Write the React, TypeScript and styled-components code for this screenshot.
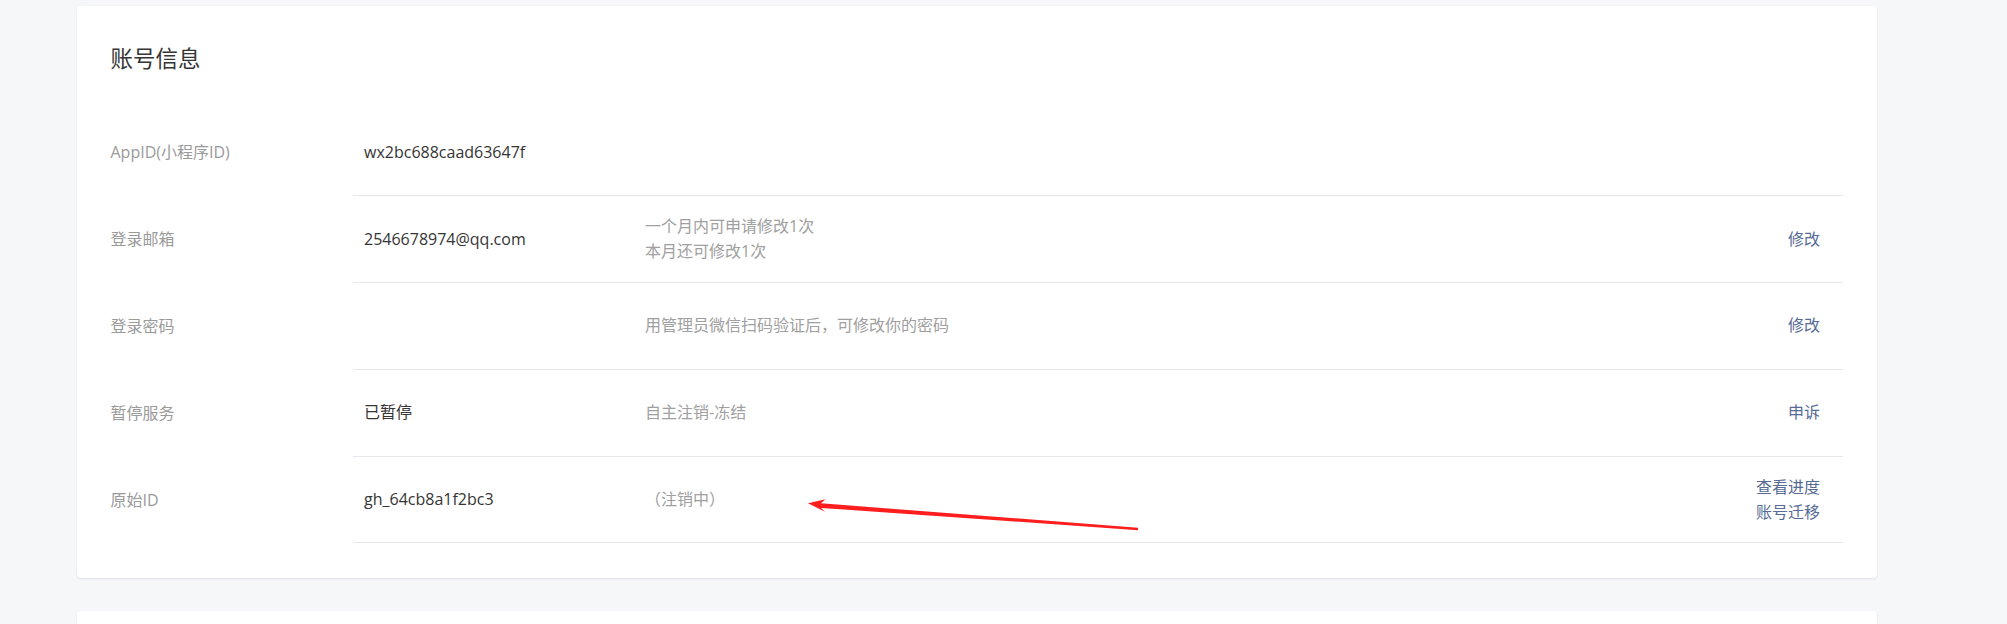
import React from "react";
import styled, { createGlobalStyle } from "styled-components";

const GlobalStyle = createGlobalStyle`
  html, body {
    margin: 0;
    padding: 0;
    background: #f6f7f9;
  }
  body {
    font-family: "Open Sans", "Noto Sans CJK SC", sans-serif;
    font-size: 16px;
    color: #353535;
    -webkit-font-smoothing: antialiased;
  }
`;

const Page = styled.div`
  position: relative;
  box-sizing: border-box;
  width: 2007px;
  min-height: 624px;
  padding: 6px 130px 40px 77px;
  background: #f6f7f9;
  overflow: hidden;
`;

const Card = styled.section<{ $tall?: boolean }>`
  box-sizing: border-box;
  width: 1800px;
  background: #ffffff;
  border-radius: 4px;
  box-shadow: 0 1px 2px rgba(140, 145, 155, 0.22);
  padding: 29px 34px 35px 33.5px;
  & + & {
    margin-top: 33px;
  }
  ${(p) => (p.$tall ? "min-height: 200px;" : "")}
`;

const Title = styled.h2`
  margin: 0;
  font-family: "Noto Sans CJK SC", sans-serif;
  font-size: 22.5px;
  font-weight: 400;
  line-height: 44px;
  height: 44px;
  color: #353535;
`;

const List = styled.div`
  margin-top: 30.5px;
  display: flex;
  flex-direction: column;
`;

const Row = styled.div`
  display: grid;
  grid-template-columns: 242.5px 1fr;
  height: 86.8px;
`;

const Label = styled.div`
  display: flex;
  align-items: center;
  color: #9a9a9a;
  font-size: 16px;
  line-height: 25px;
`;

const Content = styled.div`
  box-sizing: border-box;
  display: grid;
  grid-template-columns: 281px 1fr auto;
  align-items: center;
  padding: 0 23px 0 11px;
  border-bottom: 1px solid #e7e7eb;
`;

const Value = styled.div`
  color: #353535;
  font-size: 16px;
  line-height: 25px;
  white-space: nowrap;
`;

const Hint = styled.div`
  display: flex;
  flex-direction: column;
  color: #a0a0a0;
  font-size: 16px;
  line-height: 25px;
`;

const Actions = styled.div`
  display: flex;
  flex-direction: column;
  align-items: flex-end;
`;

const Action = styled.a`
  color: #576b95;
  font-size: 16px;
  line-height: 25px;
  text-decoration: none;
  cursor: pointer;
`;

const Annotation = styled.svg`
  position: absolute;
  left: 800px;
  top: 494px;
  width: 345px;
  height: 40px;
  pointer-events: none;
  overflow: visible;
`;

type Item = {
  label: string;
  value?: string;
  hint?: string[];
  actions?: string[];
};

const items: Item[] = [
  { label: "AppID(小程序ID)", value: "wx2bc688caad63647f" },
  {
    label: "登录邮箱",
    value: "2546678974@qq.com",
    hint: ["一个月内可申请修改1次", "本月还可修改1次"],
    actions: ["修改"],
  },
  {
    label: "登录密码",
    hint: ["用管理员微信扫码验证后，可修改你的密码"],
    actions: ["修改"],
  },
  {
    label: "暂停服务",
    value: "已暂停",
    hint: ["自主注销-冻结"],
    actions: ["申诉"],
  },
  {
    label: "原始ID",
    value: "gh_64cb8a1f2bc3",
    hint: ["（注销中）"],
    actions: ["查看进度", "账号迁移"],
  },
];

export default function App() {
  return (
    <>
      <GlobalStyle />
      <Page>
        <Card>
          <Title>账号信息</Title>
          <List>
            {items.map((it) => (
              <Row key={it.label}>
                <Label>{it.label}</Label>
                <Content>
                  <Value>{it.value ?? ""}</Value>
                  <Hint>
                    {(it.hint ?? []).map((h) => (
                      <span key={h}>{h}</span>
                    ))}
                  </Hint>
                  <Actions>
                    {(it.actions ?? []).map((a) => (
                      <Action key={a}>{a}</Action>
                    ))}
                  </Actions>
                </Content>
              </Row>
            ))}
          </List>
        </Card>
        <Card $tall />
        <Annotation viewBox="0 0 345 40">
          <polygon
            points="8,9.3 25.5,5.3 21,9.3 338,33.8 338,36.2 21,13.9 25,17.7"
            fill="#ff1e1e"
          />
        </Annotation>
      </Page>
    </>
  );
}
